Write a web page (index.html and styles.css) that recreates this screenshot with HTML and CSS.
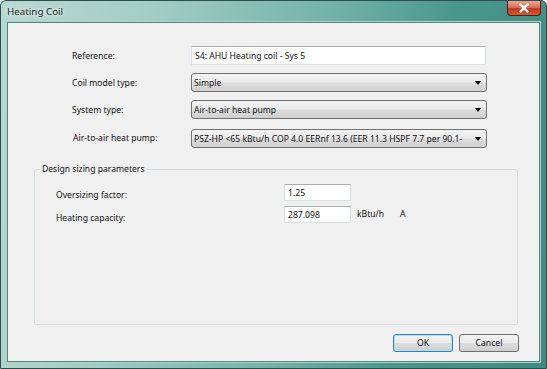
FILE: index.html
```html
<!DOCTYPE html>
<html>
<head>
<meta charset="utf-8">
<link rel="stylesheet" href="styles.css">
</head>
<body>
<div class="window">
  <div class="titlebar">
    <span class="title">Heating Coil</span>
    <div class="close"><svg width="14" height="10" viewBox="0 0 14 10"><path d="M3.5 1.5 L10.5 8.5 M10.5 1.5 L3.5 8.5" stroke="#ffffff" stroke-width="2.4" stroke-linecap="square"/></svg></div>
  </div>
  <div class="client">
    <div class="form">
      <label class="lbl">Reference:</label>
      <div class="textbox wide">S4: AHU Heating coil - Sys 5</div>
      <label class="lbl">Coil model type:</label>
      <div class="combo"><span class="ctext">Simple</span><span class="arrow"></span></div>
      <label class="lbl">System type:</label>
      <div class="combo"><span class="ctext">Air-to-air heat pump</span><span class="arrow"></span></div>
      <label class="lbl lbl-shift">Air-to-air heat pump:</label>
      <div class="combo combo-last"><span class="ctext">PSZ-HP &lt;65 kBtu/h COP 4.0 EERnf 13.6 (EER 11.3 HSPF 7.7 per 90.1-</span><span class="arrow"></span></div>
    </div>
    <div class="group">
      <div class="legend">Design sizing parameters</div>
      <div class="grow">
        <span class="glbl g1">Oversizing factor:</span>
        <div class="textbox small">1.25</div>
      </div>
      <div class="grow">
        <span class="glbl g2">Heating capacity:</span>
        <div class="textbox small">287.098</div>
        <span class="unit">kBtu/h</span>
        <span class="unit2">A</span>
      </div>
    </div>
    <div class="buttons">
      <div class="btn default">OK</div>
      <div class="btn">Cancel</div>
    </div>
  </div>
</div>
</body>
</html>
```
FILE: styles.css
```css
html, body {
  margin: 0;
  padding: 0;
  background: #ffffff;
}
body {
  font-family: "Noto Sans", "DejaVu Sans", sans-serif;
  font-size: 8.6px;
  color: #111;
}
.window {
  width: 547px;
  height: 369px;
  box-sizing: border-box;
  border: 1px solid #2b4f4b;
  border-radius: 6px 6px 0 0;
  background: linear-gradient(100deg, #b9d9d3 0%, #a2cdc5 25%, #72b2a8 55%, #4a968c 75%, #3d8b82 100%);
  display: flex;
  flex-direction: column;
  overflow: hidden;
}
.titlebar {
  height: 21px;
  display: flex;
  align-items: flex-start;
  justify-content: space-between;
  flex-shrink: 0;
}
.title {
  padding: 4px 0 0 6px;
  font-size: 9.8px;
  color: #1a1a1a;
  text-shadow: 0 0 6px rgba(255,255,255,0.9), 0 0 3px rgba(255,255,255,0.8);
}
.close {
  width: 34px;
  height: 15px;
  margin-right: 5px;
  box-sizing: border-box;
  border: 1px solid #5a1e16;
  border-top: none;
  border-radius: 0 0 4px 4px;
  background: linear-gradient(#e8a592 0%, #d9735d 45%, #c2381d 55%, #d15a34 100%);
  display: flex;
  align-items: center;
  justify-content: center;
}
.client {
  flex: 1;
  margin: 0 6px 6px 6px;
  border: 1px solid #5d8580;
  box-shadow: 0 0 0 1px #a9d2cb;
  background: #f0f0f0;
  display: flex;
  flex-direction: column;
  position: relative;
}
.form {
  display: grid;
  grid-template-columns: 120px 296px;
  row-gap: 8px;
  padding: 23px 0 0 63px;
  align-items: center;
}
.lbl {
  padding-left: 1px;
}
.lbl-shift { padding-left: 2px; }
.textbox {
  height: 19px;
  box-sizing: border-box;
  background: #fff;
  border: 1px solid #dbdfe6;
  border-top-color: #abadb3;
  padding: 3px 0 0 3px;
  line-height: 12px;
  white-space: nowrap;
  overflow: hidden;
}
.wide { width: 295px; }
.combo {
  height: 19px;
  width: 296px;
  box-sizing: border-box;
  border: 1px solid #707070;
  border-radius: 3px;
  background: linear-gradient(#f2f2f2 0%, #ebebeb 48%, #dddddd 52%, #cfcfcf 100%);
  display: flex;
  align-items: center;
  padding: 0 5px 0 2px;
}
.combo-last { margin-top: 2px; }
.ctext {
  flex: 1;
  white-space: nowrap;
  overflow: hidden;
  line-height: 12px;
}
.arrow {
  width: 0;
  height: 0;
  margin-left: 4px;
  border-left: 3.5px solid transparent;
  border-right: 3.5px solid transparent;
  border-top: 4px solid #000;
}
.group {
  margin: 21px 21px 0 26px;
  height: 156px;
  border: 1px solid #d5dfe5;
  border-radius: 3px;
  position: relative;
  padding-top: 14px;
  box-sizing: border-box;
}
.legend {
  position: absolute;
  top: -7px;
  left: 5px;
  padding: 0 2px;
  background: #f0f0f0;
  line-height: 12px;
}
.grow {
  display: flex;
  align-items: center;
  height: 16px;
  margin-bottom: 6px;
  padding-left: 21px;
}
.glbl {
  width: 228px;
}
.g1 { padding-top: 6px; }
.g2 { padding-top: 8px; }
.small {
  width: 67px;
  height: 17px;
  padding-top: 2px;
}
.unit {
  margin-left: 6px;
  width: 43px;
}
.buttons {
  display: flex;
  justify-content: flex-end;
  gap: 6px;
  padding: 9px 20px 0 0;
}
.btn {
  width: 60px;
  height: 18px;
  box-sizing: border-box;
  border: 1px solid #707070;
  border-radius: 3px;
  background: linear-gradient(#f2f2f2 0%, #ebebeb 48%, #dddddd 52%, #cfcfcf 100%);
  display: flex;
  align-items: center;
  justify-content: center;
}
.btn.default {
  border-color: #3c7fb1;
  box-shadow: inset 0 0 0 1px #a8e0f6;
}
```
